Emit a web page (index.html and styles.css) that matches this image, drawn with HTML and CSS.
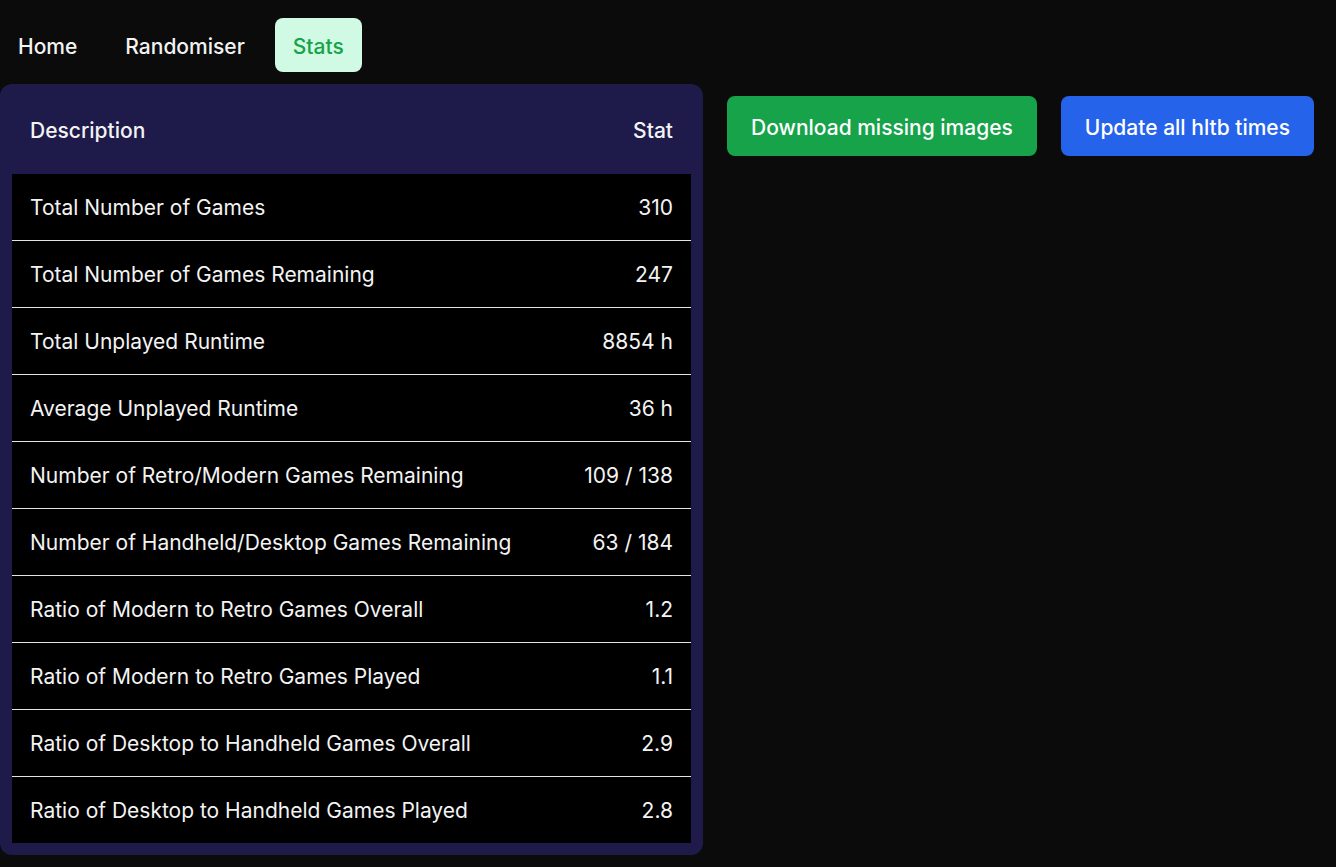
FILE: index.html
```html
<!DOCTYPE html>
<html lang="en">
<head>
<meta charset="utf-8">
<title>Stats</title>
<link rel="stylesheet" href="styles.css">
</head>
<body>
<nav class="nav">
  <a class="nav-item">Home</a>
  <a class="nav-item">Randomiser</a>
  <a class="nav-item active">Stats</a>
</nav>
<main class="main">
  <div class="card">
    <table class="stats">
      <thead>
        <tr><th class="desc">Description</th><th class="val">Stat</th></tr>
      </thead>
      <tbody>
        <tr><td class="desc">Total Number of Games</td><td class="val">310</td></tr>
        <tr><td class="desc">Total Number of Games Remaining</td><td class="val">247</td></tr>
        <tr><td class="desc">Total Unplayed Runtime</td><td class="val">8854 h</td></tr>
        <tr><td class="desc">Average Unplayed Runtime</td><td class="val">36 h</td></tr>
        <tr><td class="desc">Number of Retro/Modern Games Remaining</td><td class="val">109 / 138</td></tr>
        <tr><td class="desc">Number of Handheld/Desktop Games Remaining</td><td class="val">63 / 184</td></tr>
        <tr><td class="desc">Ratio of Modern to Retro Games Overall</td><td class="val">1.2</td></tr>
        <tr><td class="desc">Ratio of Modern to Retro Games Played</td><td class="val">1.1</td></tr>
        <tr><td class="desc">Ratio of Desktop to Handheld Games Overall</td><td class="val">2.9</td></tr>
        <tr><td class="desc">Ratio of Desktop to Handheld Games Played</td><td class="val">2.8</td></tr>
      </tbody>
    </table>
  </div>
  <div class="actions">
    <button class="btn btn-green">Download missing images</button>
    <button class="btn btn-blue">Update all hltb times</button>
  </div>
</main>
</body>
</html>
```
FILE: styles.css
```css
* { box-sizing: border-box; }
html, body {
  margin: 0;
  background: #0b0b0b;
  color: #f3f3f3;
  font-family: Inter, "Noto Sans", sans-serif;
}
.nav {
  display: flex;
  gap: 12px;
  padding-top: 18px;
}
.nav-item {
  display: block;
  height: 54px;
  line-height: 50px;
  padding: 4px 18px 0;
  font-size: 21px;
  font-weight: 500;
  color: #f3f3f3;
  border-radius: 8px;
}
.nav-item.active {
  background: #d1fae5;
  color: #16a34a;
}
.main {
  display: flex;
  align-items: flex-start;
  gap: 24px;
  margin-top: 12px;
}
.card {
  width: 703px;
  background: #1e1b4b;
  border-radius: 12px;
  padding: 0 12px 12px;
}
.stats {
  width: 100%;
  border-collapse: collapse;
  font-size: 21px;
}
.stats th {
  height: 90px;
  padding: 2px 18px 0 18px;
  font-weight: 500;
  text-align: left;
}
.stats td {
  height: 67px;
  background: #000;
  font-weight: 400;
  padding: 1px 18px 0 18px;
  border-top: 1px solid #e5e5e5;
}
.stats tbody tr:first-child td { border-top: none; height: 66px; }
.stats .val { text-align: right; }
.actions {
  display: flex;
  gap: 24px;
  padding-top: 12px;
}
.btn {
  height: 60px;
  padding: 2px 24px 0;
  border: none;
  border-radius: 8px;
  font-family: Inter, "Noto Sans", sans-serif;
  font-size: 21px;
  font-weight: 500;
  color: #fff;
}
.btn-green { background: #16a34a; }
.btn-blue { background: #2563eb; }
```
